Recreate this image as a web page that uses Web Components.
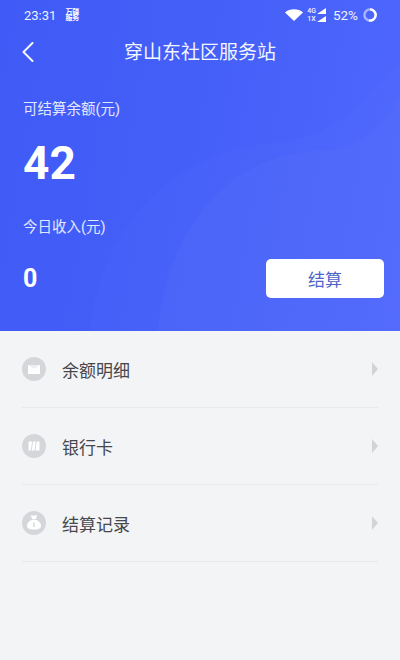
<!DOCTYPE html>
<html lang="zh">
<head>
<meta charset="utf-8">
<title>穿山东社区服务站</title>
<style>
  html, body { margin: 0; padding: 0; }
  body {
    width: 400px;
    height: 660px;
    overflow: hidden;
    background: #f3f4f6;
    font-family: "Roboto", "Noto Sans CJK SC", sans-serif;
  }
</style>
</head>
<body>
<wallet-page>
  <balance-panel slot="top" title="穿山东社区服务站" balance="42" today="0"></balance-panel>
  <menu-row icon="mail">余额明细</menu-row>
  <menu-row icon="card">银行卡</menu-row>
  <menu-row icon="bag">结算记录</menu-row>
</wallet-page>

<script>
class WalletPage extends HTMLElement {
  constructor() {
    super();
    this.attachShadow({ mode: 'open' });
  }

  connectedCallback() {
    this.shadowRoot.innerHTML = `
      <style>
        :host { display: block; width: 400px; height: 660px; }
        .list { display: flex; flex-direction: column; padding: 0 22px; }
      </style>
      <slot name="top"></slot>
      <div class="list"><slot></slot></div>
    `;
  }
}

class StatusBar extends HTMLElement {
  constructor() {
    super();
    this.attachShadow({ mode: 'open' });
  }

  connectedCallback() {
    this.shadowRoot.innerHTML = `
      <style>
        :host {
          display: flex;
          align-items: center;
          height: 30px;
          padding: 0 23px 0 24px;
          color: #eef1ff;
          font-size: 13px;
        }
        .carrier { display: grid; margin-left: 9px; font-size: 7px; line-height: 6.500px; font-weight: 700; text-align: center; color: #fff; }
        .right { margin-left: auto; display: flex; align-items: center; }
        .net { display: grid; font-size: 7px; line-height: 8.500px; font-weight: 500; margin: 0 0 0 4px; }
        .pct { margin: 0 5px 0 7px; font-size: 13.500px; }
        svg { display: block; }
      </style>
      <span>23:31</span>
      <span class="carrier"><span>万疆</span><span>服务</span></span>
      <div class="right">
        <svg width="18" height="12" viewBox="0 0 18 12"><path d="M0 3.600C2.400 1.400 5.500.3 9 .3s6.600 1.100 9 3.300L9 12z" fill="#fff"/></svg>
        <span class="net"><span>4G</span><span>1X</span></span>
        <svg width="10" height="14" viewBox="0 0 10 14"><path d="M10 0v6H1zM10 8v6H1z" fill="#fff"/></svg>
        <span class="pct">52%</span>
        <svg width="14" height="14" viewBox="0 0 14 14" fill="none" stroke-width="2.400">
          <circle cx="7" cy="7" r="5.600" stroke="#a9b5fb"/>
          <path d="M7 1.400A5.600 5.600 0 1 1 6 12.500" stroke="#fff"/>
        </svg>
      </div>
    `;
  }
}

class BalancePanel extends HTMLElement {
  constructor() {
    super();
    this.attachShadow({ mode: 'open' });
  }

  connectedCallback() {
    const title = this.getAttribute('title');
    const balance = this.getAttribute('balance');
    const today = this.getAttribute('today');
    this.shadowRoot.innerHTML = `
      <style>
        :host {
          display: block;
          position: relative;
          height: 331px;
          box-sizing: border-box;
          overflow: hidden;
          color: #fff;
          background: linear-gradient(100deg, #3f5af6 0%, #4560f8 50%, #4f67fd 100%);
        }
        .waves { position: absolute; inset: 0; }
        .content { position: relative; }
        nav {
          display: grid;
          grid-template-columns: 56px 1fr 56px;
          align-items: center;
          height: 44px;
        }
        nav svg { display: block; margin-left: 22px; }
        h1 { margin: 0 0 3px; font-size: 19px; font-weight: 400; text-align: center; color: #f4f6ff; }
        .body { padding: 26px 16px 0 23px; }
        .label { font-size: 14.500px; line-height: 20px; color: #e3e8ff; }
        .big { font-size: 46px; line-height: 54px; font-weight: 700; margin: 16px 0 0; }
        .label.today { margin-top: 28px; }
        .foot { display: flex; align-items: center; justify-content: space-between; margin-top: 21px; height: 39px; }
        .zero { font-size: 25px; font-weight: 700; }
        button {
          width: 118px;
          height: 39px;
          border: 0;
          border-radius: 5px;
          background: #fff;
          color: #4d64c8;
          font: 400 17px "Noto Sans CJK SC", sans-serif;
        }
      </style>
      <svg class="waves" width="400" height="331" viewBox="0 0 400 331">
        <path d="M90 331C100 240 150 170 250 146C300 140 335 135 372 90 L400 60V331z" fill="#fff" fill-opacity=".015"/>
        <path d="M158 331C165 240 220 150 330 150C360 145 385 125 400 95V331z" fill="#fff" fill-opacity=".02"/>
      </svg>
      <div class="content">
        <status-bar></status-bar>
        <nav>
          <svg width="12" height="20" viewBox="0 0 12 20" fill="none" stroke="#f4f6ff" stroke-width="2" stroke-linecap="round" stroke-linejoin="round"><path d="M10.500 1L1.500 10l9 9"/></svg>
          <h1>${title}</h1>
          <span></span>
        </nav>
        <div class="body">
          <div class="label">可结算余额(元)</div>
          <div class="big">${balance}</div>
          <div class="label today">今日收入(元)</div>
          <div class="foot">
            <span class="zero">${today}</span>
            <button>结算</button>
          </div>
        </div>
      </div>
    `;
  }
}

const ROW_ICONS = {
  mail: '<path d="M6 8h12v9H6z" fill="#fff"/><path d="M6 8l6 3.800L18 8z" fill="#eceded"/>',
  card: '<path d="M6.500 7.500h3.600l-1.200 9H6.500zM11 7.500h2.800l-1.200 9H9.800zM14.700 7.500h2.800v9h-4z" fill="#fff"/>',
  bag: '<path d="M8.500 4.500h7l-1.800 3.800h-3.400z" fill="#fff"/><path d="M12 8.800c4 0 7 3 7 6 0 2.500-2 3.700-7 3.700s-7-1.200-7-3.700c0-3 3-6 7-6z" fill="#fff"/><path d="M12 11.500v4.500" stroke="#d5d6d9" stroke-width="1.400"/>'
};

class MenuRow extends HTMLElement {
  constructor() {
    super();
    this.attachShadow({ mode: 'open' });
  }

  connectedCallback() {
    const icon = ROW_ICONS[this.getAttribute('icon')];
    this.shadowRoot.innerHTML = `
      <style>
        :host {
          display: flex;
          align-items: center;
          height: 77px;
          box-sizing: border-box;
          border-bottom: 1px solid #e8e9ec;
          color: #45474c;
          font-size: 17px;
        }
        .icon { display: block; width: 24px; height: 24px; margin-right: 16px; }
        .arrow { display: block; margin-left: auto; }
      </style>
      <svg class="icon" viewBox="0 0 24 24"><circle cx="12" cy="12" r="12" fill="#d5d6d9"/>${icon}</svg>
      <slot></slot>
      <svg class="arrow" width="6" height="14" viewBox="0 0 6 14"><path d="M0 0l6 7-6 7z" fill="#d2d3d7"/></svg>
    `;
  }
}

customElements.define('status-bar', StatusBar);
customElements.define('balance-panel', BalancePanel);
customElements.define('menu-row', MenuRow);
customElements.define('wallet-page', WalletPage);
</script>
</body>
</html>
